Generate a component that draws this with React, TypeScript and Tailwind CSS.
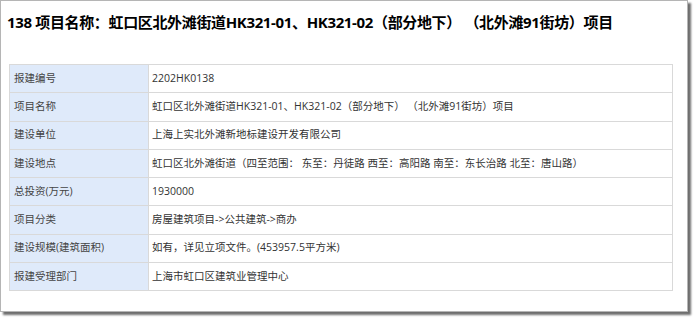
import React from "react";

const rows: [string, string][] = [
  ["报建编号", "2202HK0138"],
  ["项目名称", "虹口区北外滩街道HK321-01、HK321-02（部分地下） （北外滩91街坊）项目"],
  ["建设单位", "上海上实北外滩新地标建设开发有限公司"],
  ["建设地点", "虹口区北外滩街道（四至范围： 东至：丹徒路 西至：高阳路 南至：东长治路 北至：唐山路）"],
  ["总投资(万元)", "1930000"],
  ["项目分类", "房屋建筑项目->公共建筑->商办"],
  ["建设规模(建筑面积)", "如有，详见立项文件。(453957.5平方米)"],
  ["报建受理部门", "上海市虹口区建筑业管理中心"],
];

export default function App() {
  return (
    <div className="w-[694px] h-[320px] bg-white overflow-hidden">
      <div
        className="w-[688px] h-[312px] bg-white border border-[#b5b5b5] shadow-[3px_3px_2px_#6e6e6e] flex flex-col"
        style={{ fontFamily: '"Open Sans", "Noto Sans CJK SC", sans-serif' }}
      >
        <div className="h-[42px] pl-[6px] flex items-center text-[15px] font-bold text-black tracking-[-0.35px] whitespace-pre">
          138 项目名称：虹口区北外滩街道HK321-01、HK321-02（部分地下） （北外滩91街坊）项目
        </div>
        <div className="pl-[8px] pt-[21px]">
          <table className="w-[664px] border-collapse border border-[#d9d9d9] text-[10.5px] text-[#333]">
            <tbody>
              {rows.map(([k, v]) => (
                <tr key={k} className="h-[28.25px]">
                  <td className="w-[139px] bg-[#dfeafa] border border-[#d9d9d9] pl-[4px] text-[#444] whitespace-nowrap">
                    {k}
                  </td>
                  <td className="border border-[#d9d9d9] pl-[3px] whitespace-pre">{v}</td>
                </tr>
              ))}
            </tbody>
          </table>
        </div>
      </div>
    </div>
  );
}
